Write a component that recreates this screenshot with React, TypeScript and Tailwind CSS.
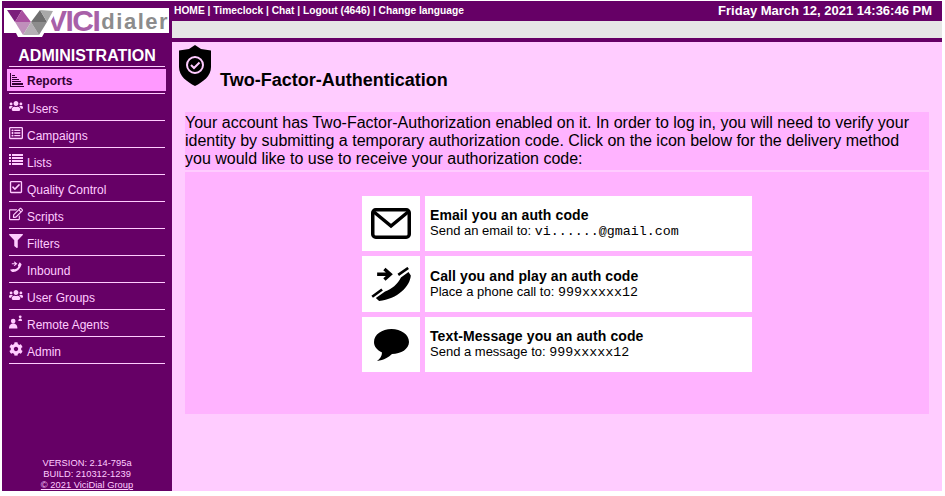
import React from "react";
import { FaUsers, FaCog, FaFilter, FaRegListAlt, FaRegCheckSquare, FaRegEdit } from "react-icons/fa";

const Shield = () => (
  <svg width="32" height="41" viewBox="0 0 32 41">
    <path d="M16 0 L22 4 L32 5.5 L32 22 C32 31 24 37 16 41 C8 37 0 31 0 22 L0 5.5 L10 4 Z" fill="#000" />
    <circle cx="16" cy="20" r="8" fill="none" stroke="#FFCCFF" strokeWidth="2" />
    <path d="M12 20 L15 23 L20.500 17.500" fill="none" stroke="#FFCCFF" strokeWidth="2" />
  </svg>
);

const ReportsIcon = () => (
  <svg width="14" height="14" viewBox="0 0 14 14" fill="#330033">
    <path d="M0 0h1v13h13v1H0z" />
    <path d="M2 2h3v1H2zM2 4h5v1H2zM2 6h7v1H2zM2 8h9v1H2zM2 10h11v2H2z" />
  </svg>
);

const ListsIcon = () => (
  <svg width="14" height="11" viewBox="0 0 14 11" fill="#FFCCFF">
    <path d="M0 0h2v2H0zM3 0h11v2H3zM0 3h2v2H0zM3 3h11v2H3zM0 6h2v2H0zM3 6h11v2H3zM0 9h2v2H0zM3 9h11v2H3z" />
  </svg>
);

const InboundIcon = () => (
  <svg width="15" height="13" viewBox="0 0 15 13" fill="#FFCCFF">
    <path d="M1 9 L3 11 C7 12 12 9 13.5 3 L11.5 1 L9.5 4 L10 5.5 C9 7.5 7.5 8 6 8.5 L4.5 8 Z" />
    <path d="M3 2h3.5L5 .5 6 0l3 2.5L6 5 5 4.5 6.5 3H3z" />
  </svg>
);

const RemoteIcon = () => (
  <svg width="15" height="14" viewBox="0 0 15 14" fill="#FFCCFF">
    <circle cx="4.5" cy="6" r="2.5" />
    <path d="M0 14c0-4 2-5.500 4.500-5.500S9 10 9 14z" />
    <circle cx="12" cy="1.500" r="1.500" />
    <path d="M10 6c0-2 1-2.800 2-2.800S14 4 14 6z" />
  </svg>
);

const Logo = () => (
  <div className="w-[165px] h-[25px] bg-white flex items-center relative">
    <svg width="56" height="30" viewBox="0 0 56 30" className="absolute left-0 top-0">
      <path d="M0 1 L14 29 L38 29 L53 2 L45 1 L30 14 L20 1 Z" fill="#fff" />
      <path d="M3 2 L18 2 L11 14 Z" fill="#7b1f7b" />
      <path d="M18 2 L27 14 L11 14 Z" fill="#a9509f" />
      <path d="M11 14 L27 14 L19 27 Z" fill="#c08fbb" />
      <path d="M19 27 L27 14 L35 27 Z" fill="#b5b0b5" />
      <path d="M27 14 L43 14 L35 27 Z" fill="#8c8c8c" />
      <path d="M27 14 L36 2 L43 14 Z" fill="#6e6e6e" />
      <path d="M36 2 L43 14 L49 3 Z" fill="#a9a9a9" />
    </svg>
    <span className="ml-[43px] text-[30px] leading-none font-bold tracking-[-1.500px] text-[#a860a8] font-['Liberation_Sans',sans-serif]">VICI</span>
    <span className="ml-[2px] mt-[2px] text-[22px] leading-none font-bold tracking-[1.500px] text-[#8c8c8c] font-['Liberation_Sans',sans-serif]">dialer</span>
  </div>
);

const menu: { label: string; icon: React.ReactNode }[] = [
  { label: "Users", icon: <FaUsers size={14} /> },
  { label: "Campaigns", icon: <FaRegListAlt size={14} /> },
  { label: "Lists", icon: <ListsIcon /> },
  { label: "Quality Control", icon: <FaRegCheckSquare size={14} /> },
  { label: "Scripts", icon: <FaRegEdit size={14} /> },
  { label: "Filters", icon: <FaFilter size={14} /> },
  { label: "Inbound", icon: <InboundIcon /> },
  { label: "User Groups", icon: <FaUsers size={14} /> },
  { label: "Remote Agents", icon: <RemoteIcon /> },
  { label: "Admin", icon: <FaCog size={14} /> },
];

const MailIcon = () => (
  <svg width="40" height="31" viewBox="0 0 40 31">
    <rect x="1.750" y="1.750" width="36.500" height="27.500" rx="3" fill="none" stroke="#000" strokeWidth="3.500" />
    <path d="M3 4 L20 18 L37 4" fill="none" stroke="#000" strokeWidth="3.500" />
  </svg>
);

const PhoneIcon = () => (
  <svg width="40" height="34" viewBox="0 0 120 103">
    <path d="M18 22 H56 M40 6 L58 22 L40 38" fill="none" stroke="#000" strokeWidth="10" />
    <path d="M82 24 L112 3 M3 90 L33 68" fill="none" stroke="#000" strokeWidth="8" />
    <path d="M14 94 L42 74 C62 68 80 52 90 32 L113 15 L120 26 C118 58 80 98 24 103 Z" fill="#000" />
  </svg>
);

const BubbleIcon = () => (
  <svg width="35" height="32" viewBox="0 0 35 32">
    <path d="M17.500 0 C27 0 35 5.500 35 13 C35 20 27 25 18 25 C15 28 10 31 3 32 C6 30 8 27 8 23.500 C3 21 0 17.500 0 13 C0 5.500 8 0 17.500 0 Z" fill="#000" />
  </svg>
);

const rows = [
  { icon: <MailIcon />, title: "Email you an auth code", sub: "Send an email to:", val: "vi......@gmail.com", h: "h-[55px]" },
  { icon: <PhoneIcon />, title: "Call you and play an auth code", sub: "Place a phone call to:", val: "999xxxxx12", h: "h-[56px]" },
  { icon: <BubbleIcon />, title: "Text-Message you an auth code", sub: "Send a message to:", val: "999xxxxx12", h: "h-[55px]" },
];

export default function App() {
  return (
    <div className="w-[945px] h-[496px] bg-white pl-[2px] pr-[3px] pt-[1px] pb-[5px] flex font-['Liberation_Sans',Arial,sans-serif] overflow-hidden">
      {/* left menu */}
      <div className="w-[170px] bg-[#660066] flex flex-col">
        <div className="pt-[7px] pl-[2px]"><Logo /></div>
        <div className="mt-[14px] text-center text-white font-bold text-[16px] leading-[18px]">ADMINISTRATION</div>
        <div className="mt-[1px] px-[7px] flex flex-col">
          <div className="border-t border-[#FFCCFF] h-[3px]" />
          <div className="bg-[#FF99FF] h-[22px] -ml-[2px] -mr-[1px] pl-[3px] pt-[2px] flex items-center gap-[3px] text-[12px] font-bold text-[#330033] mb-[2px]">
            <span className="-mt-[3px]"><ReportsIcon /></span>
            <span>Reports</span>
          </div>
          {menu.map((m) => (
            <div key={m.label} className="border-t border-[#FFCCFF] h-[27px] pt-[4px] flex items-center gap-[4px] text-[12px] text-[#FFCCFF]">
              <span className="w-[14px] flex justify-center -mt-[7px]">{m.icon}</span>
              <span>{m.label}</span>
            </div>
          ))}
          <div className="border-t border-[#FFCCFF]" />
        </div>
        <div className="mt-auto text-center text-[9.330px] leading-[11px] text-[#FFCCFF]">
          <div>VERSION: 2.14-795a</div>
          <div>BUILD: 210312-1239</div>
          <div className="underline">© 2021 ViciDial Group</div>
        </div>
      </div>

      {/* main */}
      <div className="flex-1 flex flex-col">
        <div className="bg-[#660066] h-[20px] flex items-center justify-between pl-[2px] pr-[10px]">
          <div className="text-white text-[10.240px] font-bold">HOME | Timeclock | Chat | Logout (4646) | Change language</div>
          <div className="text-white text-[13px] font-bold">Friday March 12, 2021 14:36:46 PM</div>
        </div>
        <div className="bg-[#E6E6E6] h-[17px]" />
        <div className="bg-[#660066] h-[4px]" />
        <div className="flex-1 bg-[#FFCCFF] pl-[13px] pr-[13px] flex flex-col">
          <div className="flex items-start h-[70px]">
            <div className="pt-[3px] -ml-[6px]"><Shield /></div>
            <div className="ml-[9px] mt-[26px] text-[18px] leading-[24px] font-bold text-black">Two-Factor-Authentication</div>
          </div>
          <div className="bg-[#FFB3FF] h-[58px] text-[16px] leading-[18px] text-black pt-[2px]">
            Your account has Two-Factor-Authorization enabled on it. In order to log in, you will need to verify your identity by submitting a temporary authorization code. Click on the icon below for the delivery method you would like to use to receive your authorization code:
          </div>
          <div className="bg-[#FFB3FF] h-[242px] mt-[2px] pt-[24px] flex flex-col items-center gap-[5px]">
            {rows.map((r) => (
              <div key={r.title} className={`flex gap-[5px] w-[390px] ${r.h}`}>
                <div className="w-[58px] bg-white flex items-center justify-center">{r.icon}</div>
                <div className="flex-1 bg-white pl-[5px] flex flex-col justify-center text-[13px] leading-[16px] text-black">
                  <div className="text-[14px] font-bold tracking-[0.1px]">{r.title}</div>
                  <div>
                    {r.sub} <span className="font-['Liberation_Mono',monospace] text-[13.330px]">{r.val}</span>
                  </div>
                </div>
              </div>
            ))}
          </div>
        </div>
      </div>
    </div>
  );
}
